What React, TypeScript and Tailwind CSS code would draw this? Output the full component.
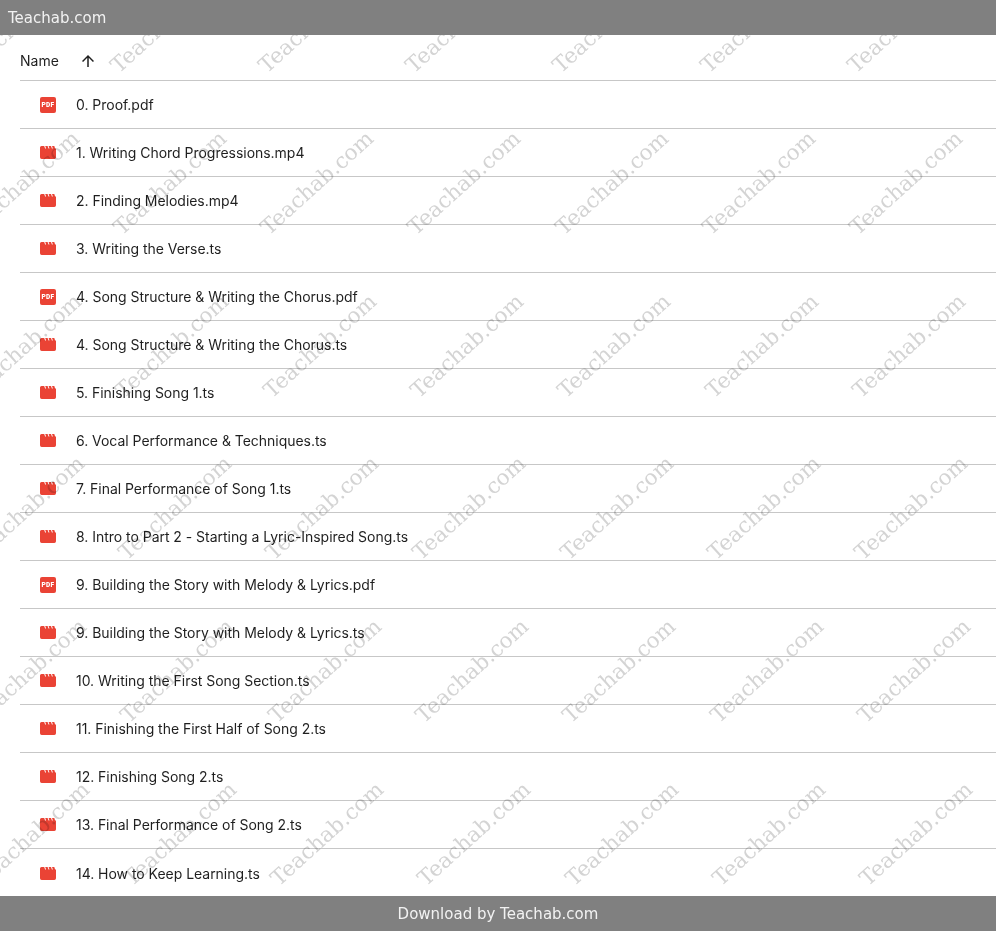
import React from "react";

const rows: [string, string][] = [
  ["pdf", "0. Proof.pdf"],
  ["vid", "1. Writing Chord Progressions.mp4"],
  ["vid", "2. Finding Melodies.mp4"],
  ["vid", "3. Writing the Verse.ts"],
  ["pdf", "4. Song Structure & Writing the Chorus.pdf"],
  ["vid", "4. Song Structure & Writing the Chorus.ts"],
  ["vid", "5. Finishing Song 1.ts"],
  ["vid", "6. Vocal Performance & Techniques.ts"],
  ["vid", "7. Final Performance of Song 1.ts"],
  ["vid", "8. Intro to Part 2 - Starting a Lyric-Inspired Song.ts"],
  ["pdf", "9. Building the Story with Melody & Lyrics.pdf"],
  ["vid", "9. Building the Story with Melody & Lyrics.ts"],
  ["vid", "10. Writing the First Song Section.ts"],
  ["vid", "11. Finishing the First Half of Song 2.ts"],
  ["vid", "12. Finishing Song 2.ts"],
  ["vid", "13. Final Performance of Song 2.ts"],
  ["vid", "14. How to Keep Learning.ts"],
];

function PdfIcon() {
  return (
    <svg width="16" height="16" viewBox="0 0 16 16" className="shrink-0">
      <rect width="16" height="16" rx="2" fill="#ea4335" />
      <text x="8" y="10.4" textAnchor="middle" fontSize="6.5" fontWeight="900" fontFamily="Roboto, sans-serif" letterSpacing="0.3" fill="#fff">PDF</text>
    </svg>
  );
}

function VidIcon() {
  return (
    <svg width="16" height="13" viewBox="0 0 16 13" className="shrink-0">
      <path d="M1.5 0H4.2L5.1 2.6H6.1L5.2 0H7.6L8.5 2.6H9.5L8.6 0H11L11.9 2.6H12.9L12 0H14.3L15.1 2.6L16 2.6V11.3A1.7 1.7 0 0 1 14.3 13H1.7A1.7 1.7 0 0 1 0 11.3V1.5A1.5 1.5 0 0 1 1.5 0Z" fill="#ea4335" />
    </svg>
  );
}

const marks: { x: number; y: number }[] = [];
for (let r = 0; r < 6; r++) {
  for (let c = 0; c < 7; c++) {
    marks.push({ x: -26 + c * 147.3 + r * 2.5, y: 75.5 + r * 162.6 });
  }
}

export default function App() {
  return (
    <div className="relative w-[996px] h-[931px] overflow-hidden bg-white font-['Inter',sans-serif]">
      <div className="h-[35px] pt-[2px] bg-[#808080] flex items-center pl-2 text-[#f2f2f2] text-[15px] font-['DejaVu_Sans',sans-serif]">Teachab.com</div>
      <div className="h-[861px] pl-[20px]">
        <div className="h-[46px] pt-[6px] flex items-center border-b border-[#c7c7c7] text-[14px] text-[#1f1f1f]">
          <span className="w-[38px]">Name</span>
          <svg width="18" height="18" viewBox="0 0 24 24" className="ml-[21px]" fill="#1f1f1f">
            <path d="M4 12l1.41 1.41L11 7.83V20h2V7.83l5.58 5.59L20 12l-8-8-8 8z" />
          </svg>
        </div>
        {rows.map(([k, name], i) => (
          <div key={i} className={"h-[48px] flex items-center text-[14px] tracking-[-0.03px] text-[#1f1f1f] " + (i < rows.length - 1 ? "border-b border-[#c7c7c7]" : "")}>
            <div className="w-[56px] pl-[20px] flex items-center">{k === "pdf" ? <PdfIcon /> : <VidIcon />}</div>
            <span>{name}</span>
          </div>
        ))}
      </div>
      <div className="h-[35px] pt-[2px] bg-[#808080] flex items-center justify-center text-[#f2f2f2] text-[15px] font-['DejaVu_Sans',sans-serif]">Download by Teachab.com</div>
      <div className="absolute left-0 right-0 top-[35px] h-[861px] overflow-hidden pointer-events-none">
        {marks.map((m, i) => (
          <span
            key={i}
            className="absolute origin-bottom-left whitespace-nowrap font-['DejaVu_Serif',serif] text-[21.5px] leading-none text-[#d4d4d4] rotate-[-42deg] mix-blend-multiply"
            style={{ left: m.x, top: m.y - 35 - 21 }}
          >
            Teachab.com
          </span>
        ))}
      </div>
    </div>
  );
}
